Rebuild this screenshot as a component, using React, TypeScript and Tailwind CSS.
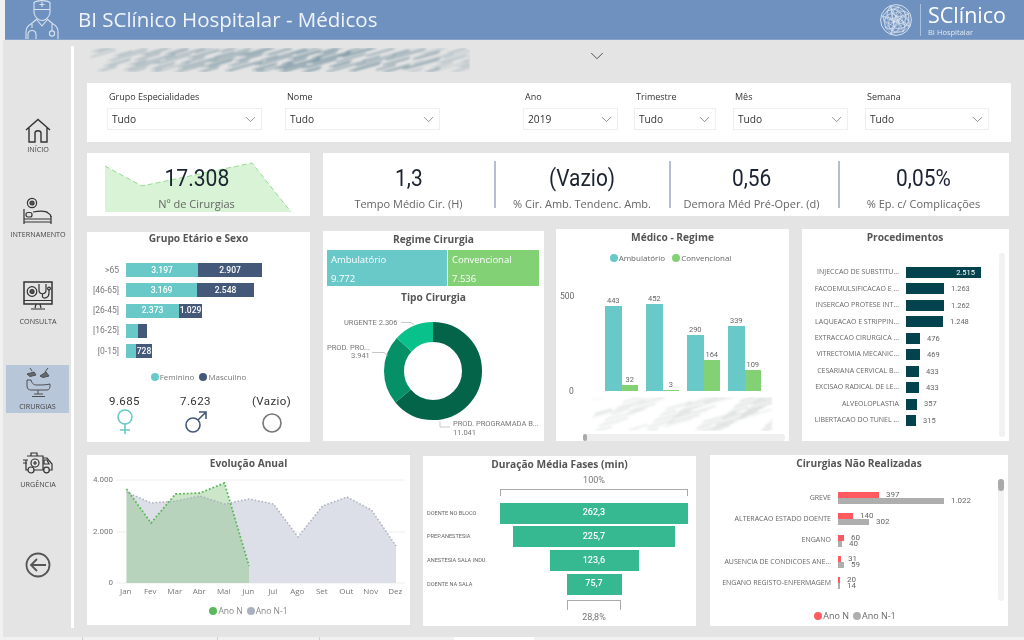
import type { ReactNode } from "react";
import { ChevronDown } from "lucide-react";

const title = "text-center text-[10.2px] font-bold leading-[14px] text-[#555555]";
const dropdowns = [
  { label: "Grupo Especialidades", value: "Tudo", box: "ml-0 w-[155px]" },
  { label: "Nome", value: "Tudo", box: "ml-[23px] w-[155px]" },
  { label: "Ano", value: "2019", box: "ml-[83px] w-[95px]" },
  { label: "Trimestre", value: "Tudo", box: "ml-[16px] w-[82px]" },
  { label: "Mês", value: "Tudo", box: "ml-[17px] w-[115px]" },
  { label: "Semana", value: "Tudo", box: "ml-[17px] w-[124px]" },
];
const kpis = [
  { value: "1,3", label: "Tempo Médio Cir. (H)", w: "w-[171px] pr-[0px]" },
  { value: "(Vazio)", label: "% Cir. Amb. Tendenc. Amb.", w: "w-[173px] pr-[1px]" },
  { value: "0,56", label: "Demora Méd Pré-Oper. (d)", w: "w-[167px] pr-[6px]" },
  { value: "0,05%", label: "% Ep. c/ Complicações", w: "w-[169px] pr-[2px]" },
];
const ages = [
  { label: ">65", f: 72, m: 64, fv: "3.197", mv: "2.907" },
  { label: "[46-65]", f: 71, m: 57, fv: "3.169", mv: "2.548" },
  { label: "[26-45]", f: 53, m: 23, fv: "2.373", mv: "1.029" },
  { label: "[16-25]", f: 12, m: 9, fv: "", mv: "" },
  { label: "[0-15]", f: 10, m: 16, fv: "", mv: "728" },
];
const doctors = [
  { a: 443, c: 32 },
  { a: 452, c: 3 },
  { a: 290, c: 164 },
  { a: 339, c: 109 },
];
const procedures = [
  ["INJECCAO DE SUBSTITU...", 75, "2.515"],
  ["FACOEMULSIFICACAO E ...", 38, "1.263"],
  ["INSERCAO PROTESE INT...", 38, "1.262"],
  ["LAQUEACAO E STRIPPIN...", 37, "1.248"],
  ["EXTRACCAO CIRURGICA ...", 14, "476"],
  ["VITRECTOMIA MECANIC...", 14, "469"],
  ["CESARIANA CERVICAL B...", 13, "433"],
  ["EXCISAO RADICAL DE LE...", 13, "433"],
  ["ALVEOLOPLASTIA", 11, "357"],
  ["LIBERTACAO DO TUNEL ...", 10, "315"],
] as const;
const phases = [
  { label: "DOENTE NO BLOCO", w: 188, v: "262,3" },
  { label: "PREP.ANESTESIA", w: 162, v: "225,7" },
  { label: "ANESTESIA SALA INDU.", w: 89, v: "123,6" },
  { label: "DOENTE NA SALA", w: 55, v: "75,7" },
];
const missed = [
  { label: "GREVE", n: 41, p: 106, nv: "397", pv: "1.022" },
  { label: "ALTERACAO ESTADO DOENTE", n: 15, p: 31, nv: "140", pv: "302" },
  { label: "ENGANO", n: 6, p: 4, nv: "60", pv: "40" },
  { label: "AUSENCIA DE CONDICOES ANE...", n: 3, p: 6, nv: "31", pv: "59" },
  { label: "ENGANO REGISTO-ENFERMAGEM", n: 2, p: 2, nv: "20", pv: "14" },
];
const months = ["Jan", "Fev", "Mar", "Abr", "Mai", "Jun", "Jul", "Ago", "Set", "Out", "Nov", "Dez"];
const prevYear = [492, 503, 501, 496, 504, 499, 504, 537, 506, 497, 510, 546];
const thisYear = [489, 523, 494, 493, 483, 566];

function monthPoints(values: number[]) {
  return values.map((y, i) => `${39.5 + i * 24.5},${y - 470}`).join(" ");
}

function Scribble({ width, height, count, color }: { width: number; height: number; count: number; color: string }) {
  const lines = Array.from({ length: count }, (_, i) => {
    const x = (i * 37) % width;
    const y = (i * 13) % height;
    const len = 14 + ((i * 7) % 30);
    return { x, y, len, o: 0.12 + ((i * 11) % 10) / 22 };
  });
  return (
    <svg width={width} height={height} className="block blur-[1px]">
      {lines.map((l, i) => (
        <line key={i} x1={l.x} y1={l.y + 4} x2={l.x + l.len} y2={l.y + 4 - l.len * 0.28} stroke={color} strokeWidth="1.6" opacity={l.o} />
      ))}
    </svg>
  );
}

function Dot({ color, label }: { color: string; label: string }) {
  return (
    <span className="flex items-center gap-[1px]">
      <span className="h-[8px] w-[8px] rounded-full" style={{ backgroundColor: color }} />
      {label}
    </span>
  );
}

function NavItem({ label, active, top, children }: { label: string; active?: boolean; top: string; children: ReactNode }) {
  return (
    <div className={`${top} flex flex-col items-center ${active ? "bg-[#b8c6da]" : ""}`}>
      {children}
      <span className="whitespace-nowrap text-[7.2px] leading-[10px] text-[#444444]">{label}</span>
    </div>
  );
}

function DoctorIcon() {
  return (
    <svg width="34" height="40" viewBox="0 0 34 40" fill="none" stroke="#ffffff" strokeWidth="1.1" className="ml-[20px] opacity-75">
      <path d="M9 2.5 C12 0 22 0 25 2.5 V9.5 H9 Z M9 9.5 V13 C10 18 14 20.5 17 20.5 C20 20.5 24 18 25 13 V9.5" />
      <path d="M17 2 V7 M14.5 4.5 H19.5" />
      <path d="M12 19 L6 24 C2 26 1 28 1 32 V40 M22 19 L28 24 C32 26 33 28 33 32 V40 M12 20 L17 26 L22 20" />
      <path d="M7 24 V28 M3 40 V35 C3 29 11 29 11 35 V40 M27 24 V31" />
      <circle cx="27" cy="33.5" r="2.6" />
    </svg>
  );
}

function GlobeLogo() {
  const pts = Array.from({ length: 30 }, (_, i) => {
    const a = i * 2.399;
    const r = 15 * Math.sqrt((i + 0.5) / 30);
    return [16 + r * Math.cos(a), 16 + r * Math.sin(a)];
  });
  return (
    <svg width="32" height="32" viewBox="0 0 32 32" fill="none" stroke="#ffffff" strokeWidth="0.55" opacity="0.8">
      <circle cx="16" cy="16" r="15.4" strokeWidth="0.9" />
      {pts.map((p, i) => (
        <g key={i}>
          <line x1={p[0]} y1={p[1]} x2={pts[(i + 3) % 30][0]} y2={pts[(i + 3) % 30][1]} />
          <line x1={p[0]} y1={p[1]} x2={pts[(i + 5) % 30][0]} y2={pts[(i + 5) % 30][1]} />
          <line x1={p[0]} y1={p[1]} x2={pts[(i + 8) % 30][0]} y2={pts[(i + 8) % 30][1]} />
        </g>
      ))}
    </svg>
  );
}

function Sidebar() {
  return (
    <aside className="flex w-[68px] shrink-0 flex-col pl-[2px]">
      <NavItem label="INÍCIO" top="mt-[78px]">
        <svg width="26" height="26" viewBox="0 0 26 26" fill="none" stroke="#333333" strokeWidth="1.4">
          <path d="M1 12 L13 1.5 L25 12 M4 10 V24 H10 V15 C10 12 16 12 16 15 V24 H22 V10" />
        </svg>
      </NavItem>
      <NavItem label="INTERNAMENTO" top="mt-[43px]">
        <svg width="30" height="31" viewBox="0 0 30 31" fill="none" stroke="#333333" strokeWidth="1.2" className="mb-[1px]">
          <circle cx="9" cy="6" r="4.6" />
          <circle cx="9" cy="6" r="2" fill="#555555" />
          <path d="M1 12 V27 M28 19 V27 M1 22 H28 M1 25 H28" />
          <rect x="3" y="15.5" width="6" height="4.5" rx="2" />
          <path d="M10 15 C16 14 23 14 25 16 C27 17 28 18 28 20" />
        </svg>
      </NavItem>
      <NavItem label="CONSULTA" top="mt-[42px]">
        <svg width="30" height="31" viewBox="0 0 30 31" fill="none" stroke="#333333" strokeWidth="1.2" className="mb-[4px]">
          <rect x="1" y="1" width="28" height="22" strokeWidth="1.5" />
          <path d="M1 19.5 H29 M13 23 L12 27 M17 23 L18 27 M8 28 H22" />
          <circle cx="9" cy="10.5" r="4.8" />
          <circle cx="9" cy="10.5" r="2" fill="#555555" />
          <path d="M16 3 V9 C16 14 23 14 23 9 V3 M19.5 13 V16 C21 18 26 17 26 12 V9" />
          <circle cx="26" cy="7.5" r="1.4" />
        </svg>
      </NavItem>
      <NavItem label="CIRURGIAS" active top="mt-[39px] ml-[1px] w-[63px] h-[48px] pt-[3px] gap-[3px]">
        <svg width="28" height="30" viewBox="0 0 28 30" fill="none" stroke="#3a3a3a" strokeWidth="1" opacity="0.85">
          <path d="M6 0 L8 3 M3 6 L10 4 L12 7 L6 8.5 Z" fill="#5a5a5a" />
          <path d="M24 0 L21 4 M16 8 L22 4 L25 8 L19 9.5 Z" fill="#5a5a5a" />
          <path d="M3 12 V18 C3 21 5 22 7 22 H23 C26 22 26 19 26 16 C22 17 17 17 13 17 C9 17 8 15 7 12 Z" />
          <path d="M14 22 V26 M8 28.5 H21 M10 26 H19" />
        </svg>
      </NavItem>
      <NavItem label="URGÊNCIA" top="mt-[38px]">
        <svg width="30" height="24" viewBox="0 0 30 24" fill="none" stroke="#333333" strokeWidth="1.2" className="mb-[4px]">
          <path d="M4 5 H20 V19 H11 M5 19 H3 V9 M20 7 H24 L29 13 V19 H26 M20 19 H21" />
          <path d="M8 5 V2 H14 V5 M21 9 H24 L26 13 H21 Z" />
          <circle cx="8" cy="19" r="3" />
          <circle cx="23.5" cy="19" r="2.8" />
          <circle cx="12" cy="12" r="4" />
          <path d="M12 10 V14 M10 12 H14 M0 9 H5 M0 12 H4" />
        </svg>
      </NavItem>
      <div className="mt-[63px] flex justify-center">
        <svg width="26" height="26" viewBox="0 0 26 26" fill="none" stroke="#555555" strokeWidth="1.8">
          <circle cx="13" cy="13" r="11.5" />
          <path d="M21 13 H6 M12 7 L6 13 L12 19" />
        </svg>
      </div>
    </aside>
  );
}

function Filters() {
  return (
    <section className="mt-[11px] flex h-[59px] w-[924px] bg-white pl-[20px] pt-[7px]">
      {dropdowns.map((d) => (
        <div key={d.label} className={d.box}>
          <div className="h-[18px] pl-[2px] text-[9px] leading-[13px] text-[#333333]">{d.label}</div>
          <div className="flex h-[22px] items-center justify-between border border-[#eeeeee] pl-[4px] pr-[2px] text-[10.2px] text-[#333333]">
            <span className="pt-[2px]">{d.value}</span>
            <ChevronDown size={17} strokeWidth={0.9} color="#555555" />
          </div>
        </div>
      ))}
    </section>
  );
}

function KpiRow() {
  return (
    <section className="mt-[11px] flex h-[63px] gap-[13px]">
      <div className="relative w-[223px] bg-white">
        <svg width="223" height="63" className="absolute left-0 top-0">
          <path d="M18 13 L55 33 L165 10 L204 59 H18 Z" fill="#d9f3d6" />
          <path d="M18 13 L55 33 L165 10 L204 59" fill="none" stroke="#93dd92" strokeDasharray="5 3" />
        </svg>
        <div className="relative flex h-full flex-col items-center pr-[4px]">
          <span className="mt-[10px] scale-x-[0.88] font-['Roboto',sans-serif] text-[24px] leading-[30px] text-[#1b2430]">17.308</span>
          <span className="mt-[4px] text-[11px] leading-[14px] text-[#666666]">Nº de Cirurgias</span>
        </div>
      </div>
      <div className="flex w-[686px] bg-white">
        {kpis.map((k, i) => (
          <div key={k.label} className="flex">
            {i > 0 && <div className="mt-[8px] h-[47px] w-[2px] bg-[#b3bfd0]" />}
            <div className={`${k.w} flex flex-col items-center`}>
              <span className="mt-[10px] scale-x-[0.87] font-['Roboto',sans-serif] text-[24px] leading-[30px] text-[#1b2430]">{k.value}</span>
              <span className="mt-[4px] whitespace-nowrap text-[11px] leading-[14px] text-[#666666]">{k.label}</span>
            </div>
          </div>
        ))}
      </div>
    </section>
  );
}

function AgeCard() {
  return (
    <div className="mt-[3px] h-[210px] w-[223px] bg-white">
      <div className={`${title} -mt-px`}>Grupo Etário e Sexo</div>
      <div className="mt-[18px] flex flex-col gap-[6.25px]">
        {ages.map((r) => (
          <div key={r.label} className="flex h-[14px] items-center font-['Roboto',sans-serif] text-[8.5px] font-medium text-white">
            <span className="w-[32px] shrink-0 text-right font-normal text-[#777777]">{r.label}</span>
            <span className="ml-[7px] flex h-full items-center justify-center bg-[#69c9c9]" style={{ width: r.f }}>{r.fv}</span>
            <span className="flex h-full items-center justify-center bg-[#44597a]" style={{ width: r.m }}>{r.mv}</span>
          </div>
        ))}
      </div>
      <div className="mt-[14px] flex justify-center gap-[5px] text-[8px] leading-[10px] text-[#777777]">
        <Dot color="#69c9c9" label="Feminino" />
        <Dot color="#44597a" label="Masculino" />
      </div>
      <div className="mt-[12px] flex font-['Roboto',sans-serif] text-[11.5px] leading-[14px] tracking-[0.4px] text-[#333333]">
        <div className="flex w-[75px] flex-col items-center">
          9.685
          <svg width="20" height="26" viewBox="0 0 20 26" fill="none" stroke="#69c9c9" strokeWidth="1.6" className="mt-[1px]">
            <circle cx="10" cy="8" r="7" />
            <path d="M10 15 V25 M5 21 H15" />
          </svg>
        </div>
        <div className="ml-[-4px] flex w-[75px] flex-col items-center">
          7.623
          <svg width="24" height="26" viewBox="0 0 24 26" fill="none" stroke="#44597a" strokeWidth="1.6" className="mt-[1px]">
            <circle cx="9" cy="16" r="7" />
            <path d="M14 11 L22 3 M15 3 H22 V10" />
          </svg>
        </div>
        <div className="ml-[1px] flex w-[75px] flex-col items-center">
          (Vazio)
          <svg width="22" height="26" viewBox="0 0 22 26" fill="none" stroke="#777777" strokeWidth="1.6" className="mt-[1px]">
            <circle cx="11" cy="14" r="9" />
          </svg>
        </div>
      </div>
    </div>
  );
}

function RegimeCard() {
  return (
    <div className="mt-[2px] h-[210px] w-[221px] bg-white pt-[1px]">
      <div className={title}>Regime Cirurgia</div>
      <div className="ml-[4px] mt-[4px] flex h-[36px] w-[212px] gap-[1px] text-[9.5px] leading-[12px] text-white">
        <div className="flex w-[120px] flex-col justify-between bg-[#69c9c9] px-[4px] pb-[1px] pt-[4px]">
          <span>Ambulatório</span>
          <span>9.772</span>
        </div>
        <div className="flex w-[91px] flex-col justify-between bg-[#82d175] px-[4px] pb-[1px] pt-[4px]">
          <span>Convencional</span>
          <span>7.536</span>
        </div>
      </div>
      <div className={`${title} mt-[4px]`}>Tipo Cirurgia</div>
      <svg width="221" height="142" viewBox="0 0 221 142" className="mt-[1px]" fontFamily="Roboto, sans-serif" fontSize="7.5" fill="#777777">
        <g fill="none" strokeWidth="20" transform="rotate(-90 110 66)">
          <circle cx="110" cy="66" r="39" stroke="#03644a" strokeDasharray="156.4 245" />
          <circle cx="110" cy="66" r="39" stroke="#059068" strokeDasharray="55.9 245" strokeDashoffset="-156.4" />
          <circle cx="110" cy="66" r="39" stroke="#09c28b" strokeDasharray="32.7 245" strokeDashoffset="-212.3" />
        </g>
        <path d="M78 17.5 H88 L91 19.5 M49 47.5 H61 L65 50.5 M117 116.5 V122 H127" fill="none" stroke="#bbbbbb" strokeWidth="0.8" />
        <text x="21" y="20">URGENTE 2.306</text>
        <text x="4" y="45">PROD. PRO...</text>
        <text x="28" y="53">3.941</text>
        <text x="130" y="121">PROD. PROGRAMADA B...</text>
        <text x="130" y="130">11.041</text>
      </svg>
    </div>
  );
}

function DoctorCard() {
  return (
    <div className="h-[212px] w-[233px] bg-white pt-[1px]">
      <div className={title}>Médico - Regime</div>
      <div className="mt-[9px] flex justify-center gap-[7px] pr-[4px] text-[8px] leading-[10px] text-[#666666]">
        <Dot color="#69c9c9" label="Ambulatório" />
        <Dot color="#82d175" label="Convencional" />
      </div>
      <div className="mt-[5px] flex h-[129px]">
        <div className="flex w-[49px] shrink-0 flex-col justify-between pl-[4px] pt-[22px] font-['Roboto',sans-serif] text-[8.5px] leading-[12px] text-[#666666]">
          <span>500</span>
          <span className="pl-[9px]">0</span>
        </div>
        <div className="flex items-end gap-[8px] pb-[6px]">
          {doctors.map((d) => (
            <div key={d.a} className="flex w-[33px] items-end font-['Roboto',sans-serif] text-[7.5px] leading-[9px] text-[#666666]">
              <div className="flex w-1/2 flex-col items-center">
                <span className="mb-[1px]">{d.a}</span>
                <div className="w-full bg-[#69c9c9]" style={{ height: d.a * 0.192 }} />
              </div>
              <div className="flex w-1/2 flex-col items-center">
                <span className="mb-[1px]">{d.c}</span>
                <div className="w-full bg-[#82d175]" style={{ height: Math.max(1, d.c * 0.192) }} />
              </div>
            </div>
          ))}
        </div>
      </div>
      <div className="ml-[34px] h-[34px] overflow-hidden">
        <Scribble width={182} height={34} count={70} color="#bcc2c2" />
      </div>
      <div className="ml-[27px] mt-[3px] h-[7px] w-[202px] rounded-full bg-[#efefef]">
        <div className="h-full w-[4px] rounded-full bg-[#aaaaaa]" />
      </div>
    </div>
  );
}

function ProceduresCard() {
  return (
    <div className="flex h-[212px] w-[207px] bg-white pt-[1px]">
      <div className="w-[197px]">
        <div className={`${title} pl-[9px]`}>Procedimentos</div>
        <div className="mt-[23px] flex flex-col gap-[5.45px]">
          {procedures.map(([label, w, v], i) => (
            <div key={label} className="flex h-[11px] items-center font-['Roboto',sans-serif] text-[7.5px] text-[#666666]">
              <span className="w-[97px] shrink-0 whitespace-nowrap text-right font-['Open_Sans',sans-serif] text-[7px]">{label}</span>
              <span className="ml-[7px] flex h-full items-center justify-end bg-[#04424e] pr-[6px] text-white" style={{ width: w }}>
                {i === 0 ? v : ""}
              </span>
              {i > 0 && <span className="ml-[7px]">{v}</span>}
            </div>
          ))}
        </div>
      </div>
      <div className="mt-[23px] h-[184px] w-[6px] rounded-full bg-[#f2f2f2]" />
    </div>
  );
}

function YearCard() {
  return (
    <div className="h-[170px] w-[323px] bg-white pt-[1px]">
      <div className={title}>Evolução Anual</div>
      <div className="relative">
        <svg width="323" height="115" viewBox="0 0 323 115" className="block">
          <path d="M29 10 H318 M29 62 H318 M29 113 H318" stroke="#eeeeee" />
          <polygon points={`39.5,113 ${monthPoints(prevYear)} 309,113`} fill="#dcdfe7" />
          <polygon points={`39.5,113 ${monthPoints(thisYear)} 162,113`} fill="#86c47e" opacity="0.42" />
          <polyline points={monthPoints(prevYear)} fill="none" stroke="#a9b0bf" strokeWidth="1.5" strokeDasharray="1.5 2" />
          <polyline points={monthPoints(thisYear)} fill="none" stroke="#5cb85c" strokeWidth="1.8" strokeDasharray="1.8 2" />
        </svg>
        <div className="absolute left-[4px] top-[4px] flex h-[115px] w-[22px] flex-col justify-between text-right font-['Roboto',sans-serif] text-[8px] leading-[12px] text-[#777777]">
          <span>4.000</span>
          <span>2.000</span>
          <span>0</span>
        </div>
      </div>
      <div className="ml-[26.5px] flex text-[8px] leading-[12px] text-[#777777]">
        {months.map((m) => (
          <span key={m} className="w-[24.5px] text-center">{m}</span>
        ))}
      </div>
      <div className="mt-[9px] flex justify-center gap-[4px] text-[8.5px] leading-[10px] text-[#888888]">
        <Dot color="#5cb85c" label="Ano N" />
        <Dot color="#a9b0bf" label="Ano N-1" />
      </div>
    </div>
  );
}

function PhasesCard() {
  return (
    <div className="mt-[1px] h-[170px] w-[273px] bg-white pt-[1px] font-['Roboto',sans-serif]">
      <div className={`${title} font-['Open_Sans',sans-serif]`}>Duração Média Fases (min)</div>
      <div className="ml-[77px] w-[188px]">
        <div className="mt-[3px] text-center text-[9px] leading-[12px] text-[#777777]">100%</div>
        <div className="mt-[3px] h-[7px] border-x border-[#aaaaaa]">
          <div className="mt-[3px] h-px bg-[#aaaaaa]" />
        </div>
      </div>
      <div className="mt-[6.5px] flex flex-col gap-[2.7px]">
        {phases.map((p) => (
          <div key={p.label} className="flex h-[21px] items-center">
            <span className="ml-[4px] w-[73px] shrink-0 whitespace-nowrap text-[5.6px] text-[#666666]">{p.label}</span>
            <div className="flex w-[188px] justify-center">
              <div className="flex h-[21px] items-center justify-center bg-[#36b991] text-[9px] font-medium text-white" style={{ width: p.w }}>
                {p.v}
              </div>
            </div>
          </div>
        ))}
      </div>
      <div className="ml-[144px] mt-[5px] w-[54px]">
        <div className="h-[10px] border-x border-[#aaaaaa]">
          <div className="mt-[5px] h-px bg-[#aaaaaa]" />
        </div>
        <div className="text-center text-[9px] leading-[14px] text-[#777777]">28,8%</div>
      </div>
    </div>
  );
}

function MissedCard() {
  return (
    <div className="flex h-[171px] w-[298px] bg-white pt-[1px]">
      <div className="w-[288px]">
        <div className={`${title} pl-[10px]`}>Cirurgias Não Realizadas</div>
        <div className="mt-[22px] flex flex-col gap-[9.3px]">
          {missed.map((r) => (
            <div key={r.label} className="flex h-[12px] items-center">
              <span className="flex w-[121px] shrink-0 justify-end whitespace-nowrap text-[7px] text-[#666666]">{r.label}</span>
              <div className="ml-[7px] flex flex-col font-['Roboto',sans-serif] text-[8px] leading-[6px] text-[#666666]">
                <div className="flex h-[6px] items-center">
                  <span className="h-full bg-[#ff5a5f]" style={{ width: r.n }} />
                  <span className="ml-[7px]">{r.nv}</span>
                </div>
                <div className="flex h-[6px] items-center">
                  <span className="h-full bg-[#aeaeae]" style={{ width: r.p }} />
                  <span className="ml-[7px]">{r.pv}</span>
                </div>
              </div>
            </div>
          ))}
        </div>
        <div className="mt-[22px] flex justify-center gap-[4px] pl-[2px] text-[9px] leading-[10px] text-[#666666]">
          <Dot color="#ff5a5f" label="Ano N" />
          <Dot color="#aeaeae" label="Ano N-1" />
        </div>
      </div>
      <div className="mt-[23px] h-[122px] w-[6px] rounded-full bg-[#f2f2f2]">
        <div className="h-[12px] rounded-full bg-[#aaaaaa]" />
      </div>
    </div>
  );
}

export default function App() {
  return (
    <div className="flex h-[640px] w-[1024px] overflow-hidden bg-[#f1f1f1] font-['Open_Sans',sans-serif] blur-[0.35px]">
      <div className="w-[3px] shrink-0" />
      <div className="flex w-[1021px] flex-col">
        <header className="ml-[2px] flex h-10 shrink-0 items-center overflow-hidden border-b border-[#86a2c8] bg-[#6e91bf] text-white">
          <DoctorIcon />
          <h1 className="ml-[19px] text-[20.5px] font-normal leading-none opacity-90">BI SClínico Hospitalar - Médicos</h1>
          <div className="ml-auto mr-[17px] flex items-center">
            <GlobeLogo />
            <div className="ml-[8px] mr-[7px] h-[32px] w-px bg-[#a9bfdc]" />
            <div className="flex w-[79px] flex-col">
              <span className="whitespace-nowrap text-[21.5px] font-medium leading-[23px]">SClínico</span>
              <span className="mt-[2px] whitespace-nowrap text-[7.5px] leading-[9px] opacity-80">BI Hospitalar</span>
            </div>
          </div>
        </header>
        <div className="flex h-[597px] shrink-0 bg-[#e4e4e4]">
          <Sidebar />
          <div className="mt-[6px] h-[582px] w-[3px] shrink-0 bg-white" />
          <main className="flex flex-col pl-[13px] pt-[8px]">
            <div className="flex h-6 items-center">
              <div className="ml-[3px] h-[24px] w-[380px] overflow-hidden">
                <Scribble width={380} height={24} count={150} color="#4d7486" />
              </div>
              <ChevronDown size={22} strokeWidth={1} color="#444444" className="mb-[8px] ml-[116px]" />
            </div>
            <Filters />
            <KpiRow />
            <section className="mt-[13px] flex h-[213px] items-start">
              <AgeCard />
              <div className="ml-[13px]"><RegimeCard /></div>
              <div className="ml-[12px]"><DoctorCard /></div>
              <div className="ml-[13px]"><ProceduresCard /></div>
            </section>
            <section className="mt-[13px] flex items-start">
              <YearCard />
              <div className="ml-[13px]"><PhasesCard /></div>
              <div className="ml-[14px]"><MissedCard /></div>
            </section>
          </main>
        </div>
        <div className="flex h-[3px] shrink-0 bg-[#f1f1f1]">
          <div className="ml-[79px] h-full w-px bg-[#cfcfcf]" />
          <div className="ml-[134px] h-full w-px bg-[#cfcfcf]" />
          <div className="ml-[101px] h-full w-px bg-[#cfcfcf]" />
          <div className="ml-[134px] h-full w-[80px] bg-white" />
        </div>
      </div>
    </div>
  );
}
